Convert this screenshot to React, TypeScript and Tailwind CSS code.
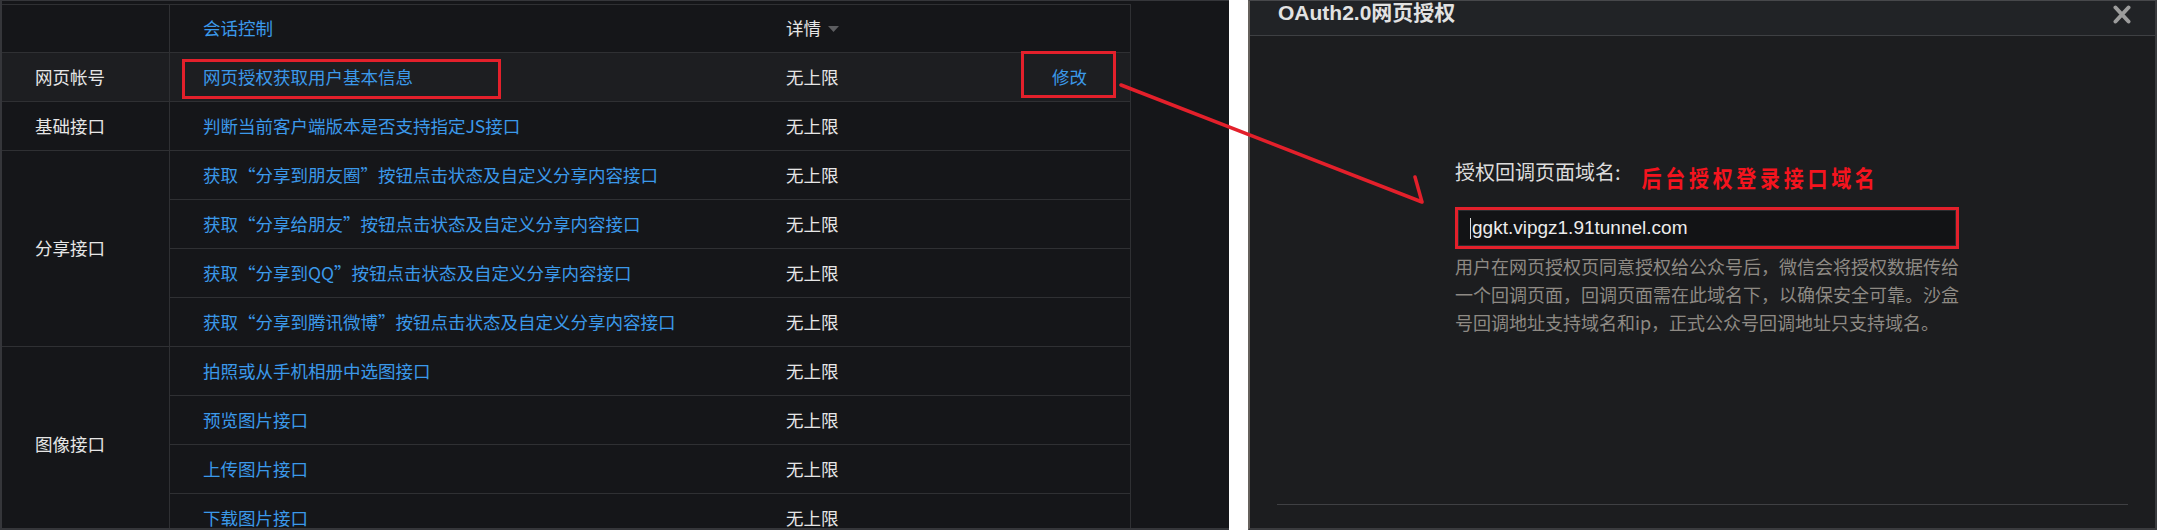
type ApiRow = {
  name: string;
  action?: string;
};

type ApiGroup = {
  title: string;
  active?: boolean;
  rows: ApiRow[];
};

const groups: ApiGroup[] = [
  {
    title: "网页帐号",
    active: true,
    rows: [{ name: "网页授权获取用户基本信息", action: "修改" }],
  },
  {
    title: "基础接口",
    rows: [{ name: "判断当前客户端版本是否支持指定JS接口" }],
  },
  {
    title: "分享接口",
    rows: [
      { name: "获取“分享到朋友圈”按钮点击状态及自定义分享内容接口" },
      { name: "获取“分享给朋友”按钮点击状态及自定义分享内容接口" },
      { name: "获取“分享到QQ”按钮点击状态及自定义分享内容接口" },
      { name: "获取“分享到腾讯微博”按钮点击状态及自定义分享内容接口" },
    ],
  },
  {
    title: "图像接口",
    rows: [
      { name: "拍照或从手机相册中选图接口" },
      { name: "预览图片接口" },
      { name: "上传图片接口" },
      { name: "下载图片接口" },
    ],
  },
];

const cjk = "font-['Noto_Sans_CJK_SC','Liberation_Sans',sans-serif]";
const latin = "font-['Liberation_Sans','Noto_Sans_CJK_SC',sans-serif]";

function ApiTable() {
  return (
    <div className="h-full w-[1229px] shrink-0 overflow-hidden border-t border-b-2 border-l-2 border-[#35363a] bg-[#151619] pt-[3px]">
      <div
        className={`w-[1129px] border-t border-r border-[#2f3033] text-[17.5px] ${cjk}`}
      >
        <div className="flex h-[48px] border-b border-[#2f3033]">
          <div className="w-[168px] shrink-0 border-r border-[#2f3033]"></div>
          <div className="flex w-[616px] items-center pl-[33px] text-[#3b99ea]">
            会话控制
          </div>
          <div className="flex items-center text-[#e6e6e6]">
            详情
            <svg width="11" height="6" viewBox="0 0 11 6" className="ml-[7px]">
              <path d="M0 0 L11 0 L5.5 6 Z" fill="#5c5d60" />
            </svg>
          </div>
        </div>
        {groups.map((group) => (
          <div
            key={group.title}
            className={`flex ${group.active ? "bg-[#1d1e21]" : ""}`}
          >
            <div className="flex w-[168px] shrink-0 items-center border-r border-b border-[#2f3033] pl-[33px] text-[#e6e6e6]">
              {group.title}
            </div>
            <div className="flex flex-1 flex-col">
              {group.rows.map((row) => (
                <div
                  key={row.name}
                  className="flex h-[49px] items-center border-b border-[#2f3033]"
                >
                  <div className="w-[616px] shrink-0 pl-[33px] whitespace-nowrap text-[#3b99ea]">
                    {row.name}
                  </div>
                  <div className="w-[266px] shrink-0 text-[#e6e6e6]">无上限</div>
                  {row.action && (
                    <div className="text-[#3b99ea]">{row.action}</div>
                  )}
                </div>
              ))}
            </div>
          </div>
        ))}
      </div>
    </div>
  );
}

function OAuthDialog() {
  return (
    <div className="flex h-full flex-1 flex-col border-t border-r-2 border-b-2 border-l-2 border-t-[#47484b] border-r-[#3a3b3e] border-b-[#3a3b3e] border-l-[#66615c] bg-[#1c1d1f]">
      <div className="flex h-[35px] shrink-0 items-start justify-between border-b border-[#3e4043] bg-[#212326] pr-[24px] pl-[28px]">
        <div
          className={`text-[21px] leading-[24px] font-bold text-[#e2e2e2] ${latin}`}
        >
          OAuth2.0网页授权
        </div>
        <svg width="18" height="19" viewBox="0 0 18 19" className="mt-[4px]">
          <path
            d="M2.5 2.5 L15.5 16.5 M15.5 2.5 L2.5 16.5"
            stroke="#9c9c9c"
            strokeWidth="4"
            strokeLinecap="round"
          />
        </svg>
      </div>
      <div className="flex flex-1 flex-col">
        <div className={`pt-[122px] pl-[205px] ${cjk}`}>
          <div className="flex items-start">
            <div className="text-[20px] leading-[28px] text-[#dcdcdc]">
              授权回调页面域名:
            </div>
            <div className="mt-[6px] ml-[21px] inline-block scale-y-115 text-[20px] leading-[28px] font-bold tracking-[3.7px] text-[#f5141e]">
              后台授权登录接口域名
            </div>
          </div>
          <div className="mt-[15px] h-[42px] w-[504px] border-[3px] border-[#e3202b]">
            <div
              className={`flex h-full items-center border border-[#2c2d30] bg-[#121315] pl-[11px] text-[19px] text-[#ececec] ${latin}`}
            >
              <span className="mr-px h-[21px] w-px bg-[#dcdcdc]"></span>
              ggkt.vipgz1.91tunnel.com
            </div>
          </div>
          <div className="mt-[3px] text-[18px] leading-[28px] whitespace-nowrap text-[#8e8a84]">
            <div>用户在网页授权页同意授权给公众号后，微信会将授权数据传给</div>
            <div>一个回调页面，回调页面需在此域名下，以确保安全可靠。沙盒</div>
            <div>号回调地址支持域名和ip，正式公众号回调地址只支持域名。</div>
          </div>
        </div>
        <div className="mx-[27px] mt-auto mb-[23px] h-px bg-[#3f4043]"></div>
      </div>
    </div>
  );
}

function App() {
  return (
    <div className="relative flex h-[530px] w-[2157px] gap-[19px] overflow-hidden bg-white">
      <ApiTable />
      <OAuthDialog />

      {/* annotation boxes + arrow drawn on top of the screenshot */}
      <div className="pointer-events-none absolute top-[59px] left-[182px] h-[40px] w-[319px] border-[3px] border-[#e3202b]"></div>
      <div className="pointer-events-none absolute top-[51px] left-[1021px] h-[47px] w-[95px] border-[3px] border-[#e3202b]"></div>
      <svg
        className="pointer-events-none absolute top-0 left-0"
        width="2157"
        height="530"
      >
        <path
          d="M1121 85 L1422 202 M1415 177 L1422 202"
          stroke="#e3202b"
          strokeWidth="3.5"
          strokeLinecap="round"
          strokeLinejoin="round"
          fill="none"
        />
      </svg>
    </div>
  );
}

export default App;
